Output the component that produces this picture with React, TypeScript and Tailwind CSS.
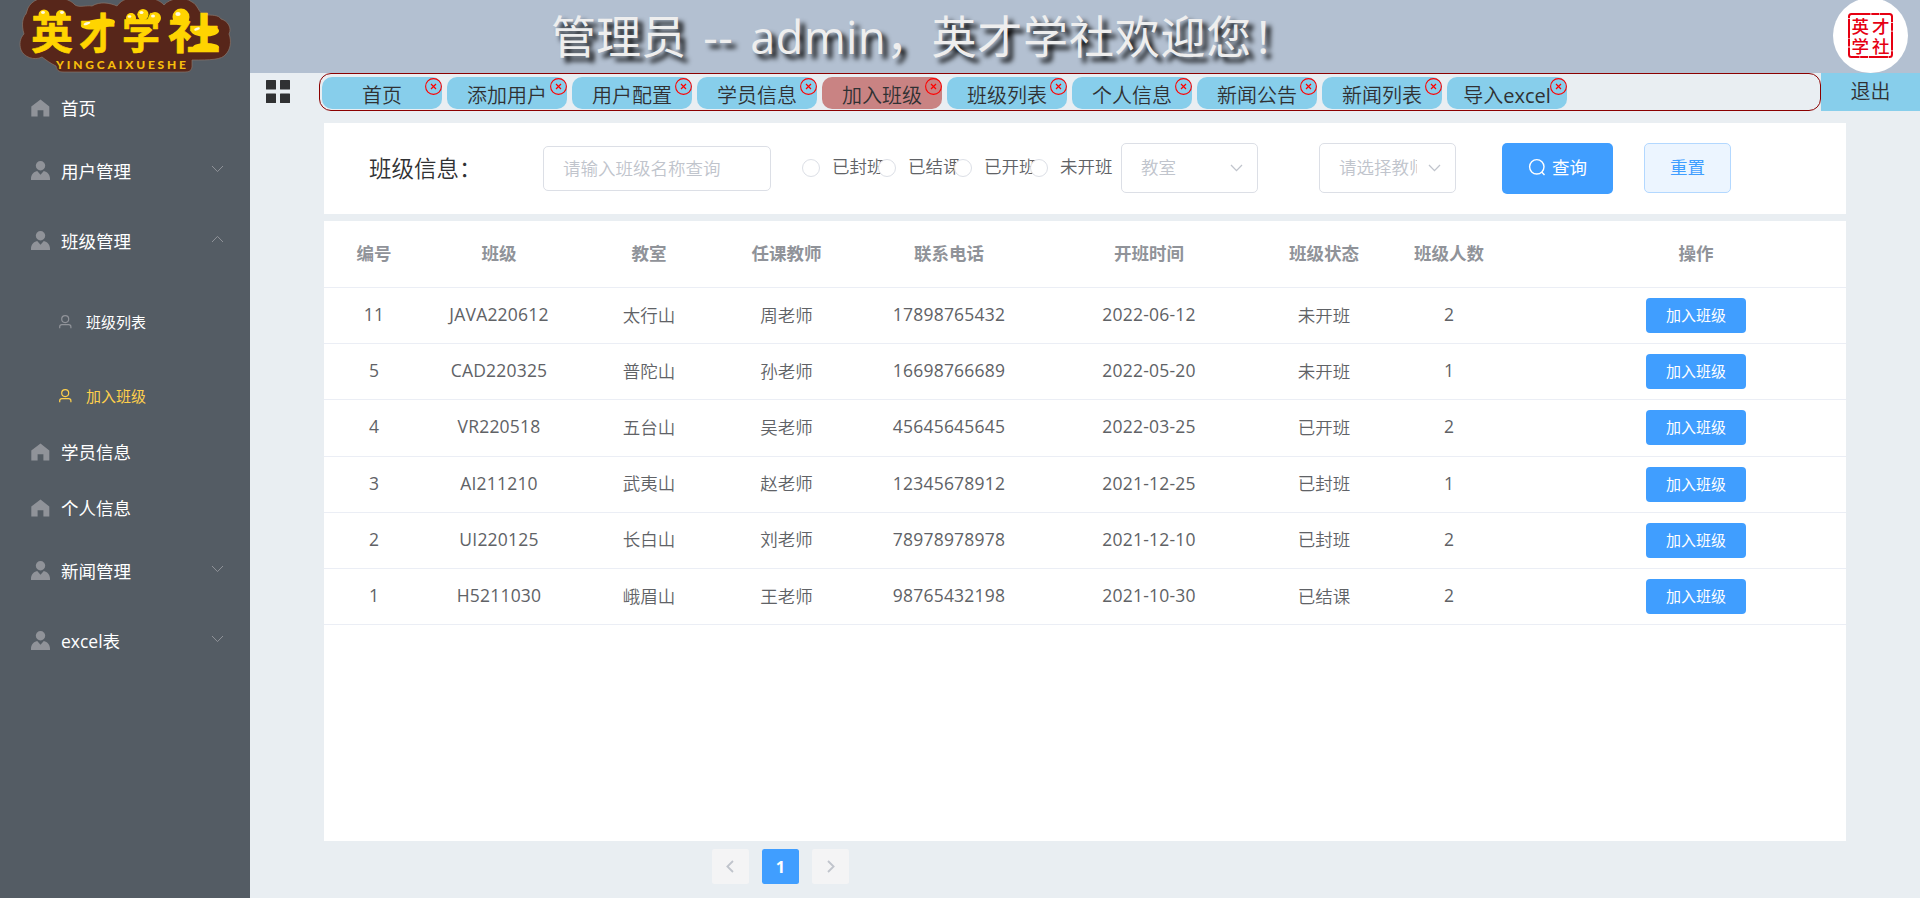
import React from "react";

const tabs = ["首页", "添加用户", "用户配置", "学员信息", "加入班级", "班级列表", "个人信息", "新闻公告", "新闻列表", "导入excel"];

const rows = [
  ["11", "JAVA220612", "太行山", "周老师", "17898765432", "2022-06-12", "未开班", "2"],
  ["5", "CAD220325", "普陀山", "孙老师", "16698766689", "2022-05-20", "未开班", "1"],
  ["4", "VR220518", "五台山", "吴老师", "45645645645", "2022-03-25", "已开班", "2"],
  ["3", "AI211210", "武夷山", "赵老师", "12345678912", "2021-12-25", "已封班", "1"],
  ["2", "UI220125", "长白山", "刘老师", "78978978978", "2021-12-10", "已封班", "2"],
  ["1", "H5211030", "峨眉山", "王老师", "98765432198", "2021-10-30", "已结课", "2"],
];

const headers = ["编号", "班级", "教室", "任课教师", "联系电话", "开班时间", "班级状态", "班级人数", "操作"];
const grid = "grid grid-cols-[100px_150px_150px_125px_200px_200px_150px_100px_347px] items-center text-center";

function HomeIcon() {
  return (
    <svg className="h-[19px] w-[19px] shrink-0" viewBox="0 0 19 19" fill="#909399">
      <path d="M9.5 0.5L18.3 7.4V17.6H12.4V11.2H6.6V17.6H0.3V7.4Z" />
    </svg>
  );
}

function UserSolidIcon() {
  return (
    <svg className="-mt-px h-[19px] w-[19px] shrink-0" viewBox="0 0 19 19" fill="#909399">
      <circle cx="9.5" cy="4.7" r="4.7" />
      <path d="M0 19V17.6C0 13.8 2.4 10.8 6.2 9.9L9.5 13.8L12.8 9.9C16.6 10.8 19 13.8 19 17.6V19Z" />
    </svg>
  );
}

function UserIcon({ color }: { color: string }) {
  return (
    <svg className="-mt-px h-[14px] w-[13px] shrink-0" viewBox="0 0 13 14" fill="none" stroke={color} strokeWidth="1.2">
      <circle cx="6.2" cy="4.1" r="3.5" />
      <path d="M0.700 13.300V11.800Q0.700 9.600 2.900 9.600H9.700Q11.900 9.600 11.900 11.800V13.300" />
    </svg>
  );
}

function Chevron({ up = false, color = "#909399", width = 1 }: { up?: boolean; color?: string; width?: number }) {
  return (
    <svg className="h-[8px] w-[13px] shrink-0" viewBox="0 0 13 8" fill="none" stroke={color} strokeWidth={width}>
      <path d={up ? "M1 7L6.5 1.4L12 7" : "M1 1L6.5 6.6L12 1"} />
    </svg>
  );
}

function Item({ label }: { label: string }) {
  return (
    <li className="flex h-14 items-center pl-[31px]">
      <HomeIcon />
      <span className="ml-[11px]">{label}</span>
    </li>
  );
}

function SubMenu({ label, open }: { label: string; open?: boolean }) {
  return (
    <li className="flex h-[70px] items-center pr-[26px] pl-[31px]">
      <UserSolidIcon />
      <span className="ml-[11px] grow">{label}</span>
      <span className="-mt-1"><Chevron up={open} /></span>
    </li>
  );
}

function Logo() {
  return (
    <svg className="h-[73px] w-[250px] shrink-0" viewBox="0 0 250 73">
      <path
        d="M28 8C32 0 42-4 52-1C60-3 70-1 75 5C80 8 86 5 92 6C100 1 110 3 117 6C122-1 130-3 138-1C150-4 160 0 164 5C170-2 184-4 192 2C198 5 198 12 204 15C212 15 219 15 221 19C228 21 232 28 229 34C232 42 230 50 226 54C222 60 210 60 192 60V67C191 72 188 72 182 72H64C58 72 57 70 56 66C50 63 46 60 42 57C34 61 24 57 21 50C19 44 20 38 24 34C21 24 23 17 26 14Z"
        fill="#57261a" stroke="#8a7468" strokeWidth="0.7"
      />
      <g fill="#ffd400" stroke="#ffd400" strokeWidth="0.6" strokeLinejoin="round" fontFamily="'Noto Sans CJK SC', sans-serif" fontWeight="700" fontSize="42">
        <text x="31" y="49" textLength="42" lengthAdjust="spacingAndGlyphs">英</text>
        <text x="79" y="49" textLength="37" lengthAdjust="spacingAndGlyphs">才</text>
        <text x="122" y="49" textLength="38" lengthAdjust="spacingAndGlyphs">学</text>
        <text x="168" y="49" textLength="52" lengthAdjust="spacingAndGlyphs">社</text>
      </g>
      <g fill="#ffd400">
        <circle cx="131" cy="18" r="5" />
        <circle cx="143" cy="14.5" r="5.5" />
        <circle cx="155" cy="18" r="6" />
        <circle cx="181" cy="17" r="8.5" />
        <ellipse cx="98" cy="24" rx="17" ry="5" transform="rotate(-8 98 24)" />
        <ellipse cx="205" cy="31" rx="14" ry="5.5" />
        <ellipse cx="206" cy="47" rx="13" ry="4" />
        <circle cx="44" cy="15" r="5.5" />
        <circle cx="61" cy="15" r="5" />
      </g>
      <g fill="#fffbe0">
        <ellipse cx="129.500" cy="16.500" rx="1.800" ry="1.300" />
        <ellipse cx="141.500" cy="12.500" rx="2" ry="1.500" />
        <ellipse cx="153" cy="16" rx="2" ry="1.500" />
        <ellipse cx="178" cy="14" rx="2.600" ry="2" />
        <ellipse cx="87" cy="23.500" rx="3.500" ry="1.300" transform="rotate(-20 87 23.500)" />
        <ellipse cx="197" cy="29" rx="3" ry="1.400" transform="rotate(-20 197 29)" />
        <ellipse cx="43" cy="12.500" rx="2" ry="1.400" />
        <ellipse cx="62" cy="12.500" rx="2" ry="1.400" />
      </g>
      <text x="56" y="68.500" textLength="130" fill="#f5bd0c" fontFamily="Lato, sans-serif" fontWeight="900" fontSize="12">YINGCAIXUESHE</text>
    </svg>
  );
}

function Avatar() {
  return (
    <svg className="h-[73px] w-[75px]" viewBox="0 2 75 73">
      <circle cx="37.500" cy="37.500" r="37.500" fill="#fff" />
      <rect x="16" y="16" width="43" height="43" rx="2.500" fill="none" stroke="#e60012" strokeWidth="2" strokeDasharray="19 0.800 8 0.600" />
      <g fill="#e60012" fontFamily="'Noto Sans CJK SC', sans-serif" fontWeight="500" fontSize="17.500">
        <text x="18.500" y="35">英</text>
        <text x="39" y="35">才</text>
        <text x="18.500" y="54.500">学</text>
        <text x="39" y="54.500">社</text>
      </g>
    </svg>
  );
}

function Select({ text }: { text: string }) {
  return (
    <div className="mb-[2px] flex h-[50px] w-[137px] shrink-0 items-center justify-between rounded-[5px] border border-[#dcdfe6] pr-[14px] pl-[19px] text-[#c0c4cc]">
      <span className="w-[78px] overflow-hidden pb-px whitespace-nowrap">{text}</span>
      <Chevron color="#c0c4cc" width={1.3} />
    </div>
  );
}

export default function App() {
  return (
    <div className="flex h-[898px] w-[1920px] overflow-hidden bg-[#e9eef2] font-['Open_Sans','Noto_Sans_CJK_SC',sans-serif] text-[17.5px] leading-6 text-[#303133]">
      <aside className="flex w-[250px] shrink-0 flex-col bg-[#545c64] text-white">
        <Logo />
        <ul className="pt-[7px]">
          <Item label="首页" />
          <SubMenu label="用户管理" />
          <SubMenu label="班级管理" open />
          <li className="h-[148px] pt-[9px] text-[15px]">
            <div className="flex h-[74px] items-center pl-[59px]">
              <UserIcon color="#909399" />
              <span className="ml-[14px]">班级列表</span>
            </div>
            <div className="flex h-[74px] items-center pl-[59px] text-[#ffd04b]">
              <UserIcon color="#ffd04b" />
              <span className="ml-[14px]">加入班级</span>
            </div>
          </li>
          <Item label="学员信息" />
          <Item label="个人信息" />
          <SubMenu label="新闻管理" />
          <SubMenu label="excel表" />
        </ul>
      </aside>

      <div className="flex grow flex-col">
        <header className="flex h-[73px] shrink-0 items-start justify-between bg-[#b3c0d1] pr-3 pl-[301px]">
          <h1 className="text-[45px] leading-[73px] whitespace-nowrap text-[#eee] [text-shadow:5px_5px_5px_#000]">
            管理员<span className="tracking-[0.5px] [word-spacing:5px]"> -- admin，</span><span className="tracking-[0.8px]">英才学社欢迎您<span className="ml-[5px]">!</span></span>
          </h1>
          <Avatar />
        </header>

        <nav className="flex h-[38px] shrink-0 text-xl font-[350]">
          <div className="w-[69px] shrink-0 pt-[7px] pl-4">
            <svg className="h-[23px] w-6" viewBox="0 0 24 23" fill="#303133">
              <rect width="10" height="9.500" rx="0.500" />
              <rect x="14" width="10" height="9.500" rx="0.500" />
              <rect y="13.500" width="10" height="9.500" rx="0.500" />
              <rect x="14" y="13.500" width="10" height="9.500" rx="0.500" />
            </svg>
          </div>
          <div className="flex w-[1502px] shrink-0 gap-[5px] rounded-[12px] border border-[#8b0000] pt-[3px] pl-[2px]">
            {tabs.map((t) => (
              <div
                key={t}
                className={`relative flex h-8 w-[120px] items-center justify-center rounded-[10px] pt-[5px] whitespace-nowrap ${t === "加入班级" ? "bg-[#c98383]" : "bg-[#87ceeb]"}`}
              >
                {t.startsWith("导入") ? <span>导入<span className="font-normal">excel</span></span> : t}
                <svg className="absolute top-px right-0 h-[17px] w-[17px]" viewBox="0 0 17 17" fill="none" stroke="#f00">
                  <circle cx="8.500" cy="8.500" r="7.900" strokeWidth="1.100" />
                  <path d="M6 6L11 11M11 6L6 11" strokeWidth="1.200" />
                </svg>
              </div>
            ))}
          </div>
          <button className="grow bg-[#87ceeb]">退出</button>
        </nav>

        <main className="flex flex-col pt-3 pl-[74px]">
          <section className="flex h-[91px] w-[1522px] items-center bg-white font-[350]">
            <label className="w-[219px] shrink-0 pl-[45px] text-[22.5px]">班级信息：</label>
            <div className="flex h-[45px] w-[228px] shrink-0 items-center rounded-[5px] border border-[#dcdfe6] pb-[2px] pl-[19px] text-[#c0c4cc]">请输入班级名称查询</div>
            <div className="mb-[2px] ml-[31px] flex w-[319px] shrink-0 text-[#606266]">
              {["已封班", "已结课", "已开班", "未开班"].map((r) => (
                <div key={r} className="flex w-[76px] shrink-0 items-center whitespace-nowrap">
                  <span className="z-10 h-[18px] w-[18px] shrink-0 rounded-full border border-[#dcdfe6] bg-white" />
                  <span className="ml-3 pb-[3px]">{r}</span>
                </div>
              ))}
            </div>
            <Select text="教室" />
            <div className="w-[61px] shrink-0" />
            <Select text="请选择教师" />
            <button className="ml-[46px] flex h-[51px] w-[111px] shrink-0 items-center justify-center gap-[6px] rounded-[5px] bg-[#409eff] pb-[3px] text-white">
              <svg className="h-[18px] w-[18px]" viewBox="0 0 18 18" fill="none" stroke="#fff" strokeWidth="1.400">
                <circle cx="8.800" cy="8.800" r="7.200" />
                <path d="M13.700 14L16.500 17" />
              </svg>
              <span className="font-normal">查询</span>
            </button>
            <button className="mb-[2px] ml-[31px] h-[50px] w-[87px] shrink-0 rounded-[5px] border border-[#b3d8ff] bg-[#ecf5ff] pb-px font-normal text-[#409eff]">重置</button>
          </section>

          <section className="mt-[7px] h-[620px] w-[1522px] bg-white text-[#606266]">
            <div className={`${grid} h-[67px] border-b border-[#ebeef5] pb-[3px] font-bold text-[#909399]`}>
              {headers.map((h, i) => (
                <div key={h} className={i === 8 ? "pl-[47px]" : ""}>{h}</div>
              ))}
            </div>
            {rows.map((r) => (
              <div key={r[0]} className={`${grid} h-[56.2px] border-b border-[#ebeef5]`}>
                {r.map((c, i) => (
                  <div key={i} className={/^[\x20-\x7e]+$/.test(c) ? "pb-[3px] tracking-[0.2px]" : "pb-[2px] font-[350]"}>{c}</div>
                ))}
                <div className="flex justify-center pl-[47px]">
                  <button className="h-[35px] w-[100px] rounded-[4px] bg-[#409eff] pb-px text-[15px] text-white">加入班级</button>
                </div>
              </div>
            ))}
          </section>

          <div className="mt-2 ml-[388px] flex gap-[13px] text-[16.25px] font-bold">
            <button className="flex h-[35px] w-[37px] items-center justify-center rounded-[2.5px] bg-[#f4f4f5] pr-[2px]">
              <svg className="h-[13px] w-2" viewBox="0 0 8 13" fill="none" stroke="#c0c4cc" strokeWidth="1.800"><path d="M7 1L1.400 6.500L7 12" /></svg>
            </button>
            <button className="h-[35px] w-[37px] rounded-[2.5px] bg-[#409eff] text-white">1</button>
            <button className="flex h-[35px] w-[37px] items-center justify-center rounded-[2.5px] bg-[#f4f4f5]">
              <svg className="h-[13px] w-2" viewBox="0 0 8 13" fill="none" stroke="#c0c4cc" strokeWidth="1.800"><path d="M1 1L6.600 6.500L1 12" /></svg>
            </button>
          </div>
        </main>
      </div>
    </div>
  );
}
